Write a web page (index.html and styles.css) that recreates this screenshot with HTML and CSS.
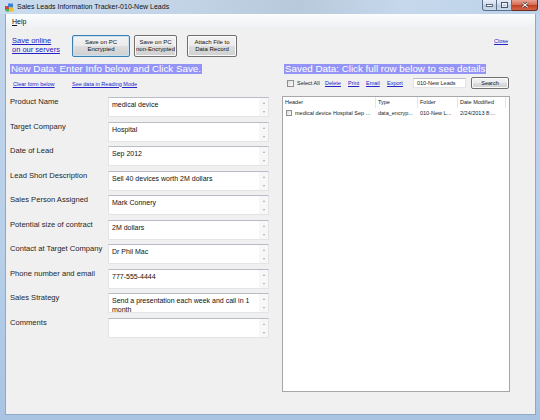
FILE: index.html
```html
<!DOCTYPE html>
<html>
<head>
<meta charset="utf-8">
<link rel="stylesheet" href="styles.css">
</head>
<body>
<div class="window">
  <div class="titlebar">
    <span class="appicon">
      <svg width="9" height="9" viewBox="0 0 9 9">
        <rect x="0" y="3" width="4" height="4" fill="#d9412b"/>
        <rect x="3" y="0.5" width="5" height="4" fill="#3e7fd3"/>
        <rect x="4" y="4.5" width="4.5" height="4" fill="#f0c030"/>
        <rect x="0.5" y="6" width="3.5" height="2.5" fill="#4caf50"/>
      </svg>
    </span>
    <span class="title">Sales Leads Information Tracker-010-New Leads</span>
    <div class="caption">
      <span class="cbtn cmin"><svg width="7" height="3" viewBox="0 0 7 3"><rect x="0.5" y="0.5" width="6" height="2" fill="#fff" stroke="#3b4a5c" stroke-width="0.8"/></svg></span>
      <span class="cbtn cmax"><svg width="7" height="6" viewBox="0 0 7 6"><rect x="0.5" y="0.5" width="6" height="5" fill="none" stroke="#3b4a5c" stroke-width="0.9"/><rect x="1.5" y="1.5" width="4" height="3" fill="none" stroke="#fff" stroke-width="0.6"/></svg></span>
      <span class="cbtn cclose"><svg width="8" height="6" viewBox="0 0 8 6"><path d="M1.2 0.6 L6.8 5.4 M6.8 0.6 L1.2 5.4" stroke="#3a1a14" stroke-width="2.2"/><path d="M1.2 0.6 L6.8 5.4 M6.8 0.6 L1.2 5.4" stroke="#fff" stroke-width="1.2"/></svg></span>
    </div>
  </div>
  <div class="body">
    <div class="menubar"><span class="menuitem"><u>H</u>elp</span></div>
    <div class="client">
      <div class="topbar">
        <div class="saveonline"><a class="link">Save online</a><a class="link">on our servers</a></div>
        <button class="btn b1 default">Save on PC<br>Encrypted</button>
        <button class="btn b2">Save on PC<br>non-Encrypted</button>
        <button class="btn b3">Attach File to<br>Data Record</button>
        <span class="spacer"></span>
        <a class="link close">Close</a>
      </div>
      <div class="panels">
        <section class="left">
          <div class="hdrrow"><span class="hdr">New Data: Enter Info below and Click Save.</span></div>
          <div class="links">
            <a class="slink clear">Clear form below</a>
            <a class="slink">See data in Reading Mode</a>
          </div>
          <div class="form">
            <label class="lbl">Product Name</label>
            <div class="tb"><span class="tbtext">medical device</span><span class="sb"><i class="up"></i><i class="dn"></i></span></div>
            <label class="lbl">Target Company</label>
            <div class="tb"><span class="tbtext">Hospital</span><span class="sb"><i class="up"></i><i class="dn"></i></span></div>
            <label class="lbl">Date of Lead</label>
            <div class="tb"><span class="tbtext">Sep 2012</span><span class="sb"><i class="up"></i><i class="dn"></i></span></div>
            <label class="lbl">Lead Short Description</label>
            <div class="tb"><span class="tbtext">Sell 40 devices worth 2M dollars</span><span class="sb"><i class="up"></i><i class="dn"></i></span></div>
            <label class="lbl">Sales Person Assigned</label>
            <div class="tb"><span class="tbtext">Mark Connery</span><span class="sb"><i class="up"></i><i class="dn"></i></span></div>
            <label class="lbl">Potential size of contract</label>
            <div class="tb"><span class="tbtext">2M dollars</span><span class="sb"><i class="up"></i><i class="dn"></i></span></div>
            <label class="lbl">Contact at Target Company</label>
            <div class="tb"><span class="tbtext">Dr Phil Mac</span><span class="sb"><i class="up"></i><i class="dn"></i></span></div>
            <label class="lbl">Phone number and email</label>
            <div class="tb"><span class="tbtext">777-555-4444</span><span class="sb"><i class="up"></i><i class="dn"></i></span></div>
            <label class="lbl">Sales Strategy</label>
            <div class="tb"><span class="tbtext">Send a presentation each week and call in 1<br>month</span><span class="sb"><i class="up"></i><i class="dn"></i></span></div>
            <label class="lbl">Comments</label>
            <div class="tb"><span class="tbtext"></span><span class="sb"><i class="up"></i><i class="dn"></i></span></div>
          </div>
        </section>
        <section class="right">
          <div class="hdrrow"><span class="hdr">Saved Data: Click full row below to see details</span></div>
          <div class="tools">
            <span class="chkwrap"><span class="chk"></span></span>
            <span class="tool selall">Select All</span>
            <a class="slink tool w-del">Delete</a>
            <a class="slink tool w-print">Print</a>
            <a class="slink tool w-email">Email</a>
            <a class="slink tool w-export">Export</a>
            <span class="folderbox">010-New Leads</span>
            <button class="btn search">Search</button>
          </div>
          <div class="list">
            <div class="lrow lhead">
              <span class="c1">Header</span>
              <span class="c2">Type</span>
              <span class="c3">Folder</span>
              <span class="c4">Date Modified</span>
              <span class="c5"></span>
            </div>
            <div class="lrow litem">
              <span class="c1"><span class="chk small"></span>medical device Hospital Sep ...</span>
              <span class="c2">data_encryp...</span>
              <span class="c3">010-New L...</span>
              <span class="c4">2/24/2013 8:...</span>
              <span class="c5"></span>
            </div>
          </div>
        </section>
      </div>
    </div>
  </div>
</div>
</body>
</html>
```
FILE: styles.css
```css
html, body {
  margin: 0;
  padding: 0;
  background: #fff;
}
* { box-sizing: border-box; }

.window {
  width: 540px;
  height: 420px;
  background: linear-gradient(to bottom, #c3d6ec 0%, #b7cfe9 60%, #a9c4e3 100%);
  display: flex;
  flex-direction: column;
  font-family: "Liberation Sans", Arial, sans-serif;
  overflow: hidden;
}

/* title bar */
.titlebar {
  height: 14px;
  display: flex;
  align-items: flex-start;
  background: linear-gradient(to right, #c9dbef 0%, #c2d3e6 35%, #b9c9dc 55%, #c6d8ec 75%, #bcd2ea 100%);
}
.appicon {
  width: 9px;
  height: 9px;
  margin: 3px 0 0 5px;
  display: flex;
}
.title {
  font-size: 7px;
  line-height: 8px;
  margin: 3px 0 0 3px;
  color: #111;
  flex: 1;
  white-space: nowrap;
}
.caption {
  display: flex;
  margin-right: 2px;
}
.cbtn {
  height: 11px;
  display: flex;
  align-items: center;
  justify-content: center;
  border: 1px solid #5d6f86;
  border-top: none;
}
.cmin {
  width: 15px;
  border-radius: 0 0 0 3px;
  background: linear-gradient(to bottom, #e6eef8 0%, #cfdbea 50%, #b9cadf 51%, #cddcee 100%);
}
.cmax {
  width: 15px;
  border-left: none;
  background: linear-gradient(to bottom, #e6eef8 0%, #cfdbea 50%, #b9cadf 51%, #cddcee 100%);
}
.cclose {
  width: 26px;
  border-left: none;
  border-radius: 0 0 3px 0;
  border-color: #6b2a20;
  background: linear-gradient(to bottom, #e8a493 0%, #d46c55 48%, #c2401f 52%, #d4654a 100%);
}

/* frame body */
.body {
  flex: 1;
  margin: 0 4px 5px 5px;
  display: flex;
  flex-direction: column;
  border: 1px solid #8fa8c6;
  border-top: none;
  background: #f0f0f0;
}
.menubar {
  height: 15px;
  background: linear-gradient(to bottom, #fbfcfd 0%, #f3f5f8 60%, #eef0f3 100%);
  display: flex;
  align-items: center;
  padding-left: 6px;
}
.menuitem {
  font-size: 7px;
  color: #111;
}
.client {
  flex: 1;
  background: #f0f0f0;
  display: flex;
  flex-direction: column;
}

/* top bar */
.topbar {
  height: 35px;
  display: flex;
  align-items: flex-start;
  padding: 6px 27px 0 6px;
}
.link {
  color: #2323c8;
  text-decoration: underline;
  cursor: pointer;
}
.saveonline {
  width: 60px;
  display: flex;
  flex-direction: column;
  font-size: 7.5px;
  line-height: 9px;
  margin-top: 1px;
}
.btn {
  font-family: "Liberation Sans", Arial, sans-serif;
  font-size: 6px;
  line-height: 7px;
  color: #111;
  padding: 0;
  height: 22px;
  border: 1px solid #707070;
  border-radius: 2px;
  background: linear-gradient(to bottom, #f3f3f3 0%, #ebebeb 48%, #dddddd 52%, #d0d0d0 100%);
  box-shadow: inset 0 0 0 1px #fafafa;
}
.b1 { width: 58px; margin-right: 4px; }
.b2 { width: 43px; margin-right: 10px; }
.b3 { width: 50px; }
.btn.default {
  border-color: #3c7fb1;
  box-shadow: inset 0 0 0 1px #c8e2f5;
}
.spacer { flex: 1; }
.close {
  font-size: 5.5px;
  margin-top: 3px;
}

/* panels */
.panels {
  flex: 1;
  display: grid;
  grid-template-columns: 274px 1fr;
}
.hdrrow {
  height: 10px;
  padding-left: 4px;
  display: flex;
}
.hdr {
  background: #9494f6;
  color: #fff;
  font-size: 9.8px;
  line-height: 10px;
  padding: 0 1px;
  white-space: nowrap;
}
.slink {
  color: #2323c8;
  text-decoration: underline;
  font-size: 5.5px;
  cursor: pointer;
}
.links {
  margin-top: 6px;
  height: 7px;
  display: flex;
  align-items: center;
  padding-left: 7px;
}
.clear { width: 59px; }

.form {
  margin-top: 10px;
  padding-left: 4px;
  display: grid;
  grid-template-columns: 98px 161px;
  grid-auto-rows: 20px;
  row-gap: 4.55px;
}
.lbl {
  font-size: 7.6px;
  line-height: 9px;
  color: #262626;
  padding-top: 0px;
  white-space: nowrap;
}
.tb {
  background: #fff;
  border: 1px solid #e2e4e8;
  border-top-color: #b8bcc4;
  display: flex;
}
.tbtext {
  flex: 1;
  font-size: 7px;
  line-height: 8.5px;
  color: #111;
  padding: 3px 0 0 3px;
  white-space: nowrap;
}
.sb {
  width: 9px;
  background: #f7f7f7;
  display: flex;
  flex-direction: column;
  justify-content: space-between;
  align-items: center;
  padding: 4px 0 3px;
}
.sb i {
  width: 0;
  height: 0;
  border-left: 1.5px solid transparent;
  border-right: 1.5px solid transparent;
}
.sb .up { border-bottom: 2px solid #a8a8a8; }
.sb .dn { border-top: 2px solid #a8a8a8; }

/* right panel */
.tools {
  margin-top: 3px;
  height: 12px;
  display: flex;
  align-items: center;
  padding-left: 7px;
  font-size: 5.5px;
  color: #222;
}
.chkwrap { width: 10px; display: flex; }
.chk {
  width: 7px;
  height: 7px;
  border: 1px solid #8e8f8f;
  background: linear-gradient(135deg, #dcdcdc, #fbfbfb);
  display: inline-block;
}
.chk.small {
  width: 6px;
  height: 6px;
  margin-right: 3px;
  vertical-align: -1px;
}
.tool { white-space: nowrap; }
.selall { width: 28px; }
.w-del { width: 23px; }
.w-print { width: 18px; }
.w-email { width: 21px; }
.w-export { width: 26px; }
.folderbox {
  width: 53px;
  height: 10px;
  background: #fff;
  border: 1px solid #e2e4e8;
  border-top-color: #b8bcc4;
  font-size: 5.5px;
  line-height: 8px;
  padding-left: 3px;
  margin-right: 5px;
}
.btn.search {
  width: 38px;
  height: 12px;
  font-size: 5.5px;
  line-height: 10px;
}
.list {
  margin: 7px 0 0 2px;
  width: 228px;
  height: 296px;
  background: #fff;
  border: 1px solid #a7a7a7;
}
.lrow {
  display: grid;
  grid-template-columns: 93px 42px 40px 48px 1fr;
  font-size: 5.5px;
  color: #222;
  white-space: nowrap;
}
.lhead {
  height: 11px;
  line-height: 11px;
}
.lhead span {
  border-right: 1px solid #e6e6e6;
  padding-left: 2px;
}
.lhead .c5 { border-right: none; }
.litem {
  height: 11px;
  line-height: 11px;
}
.litem span {
  padding-left: 2px;
  overflow: hidden;
}
.litem .c1 { padding-left: 3px; }
```
